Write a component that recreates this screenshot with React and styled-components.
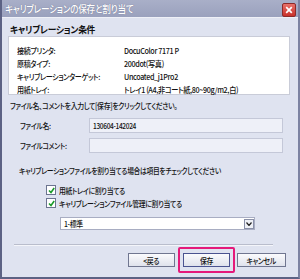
import React from 'react'
import styled, { createGlobalStyle } from 'styled-components'

const Global = createGlobalStyle`
  html, body {
    margin: 0;
    padding: 0;
    background: #dfe3f0;
  }
  body {
    font-family: "Noto Sans CJK JP", "Liberation Sans", sans-serif;
    font-size: 8px;
    font-weight: 500;
    font-feature-settings: "palt";
    letter-spacing: -0.4px;
    color: #111;
    white-space: nowrap;
  }
`

// the dialog's UI font is narrower than Noto, so squeeze text horizontally
const Narrow = styled.span`
  display: inline-block;
  transform: scaleX(${p => p.$sx || 0.86});
  transform-origin: ${p => p.$origin || 'left'} center;
`

const Win = styled.div`
  width: 300px;
  height: 279px;
  box-sizing: border-box;
  border-left: 2px solid #5c6284;
  border-right: 2px solid #7d83a2;
  border-bottom: 2px solid #5c6284;
  background: #dfe3f0;
  display: flex;
  flex-direction: column;
  overflow: hidden;
`

const TitleBar = styled.div`
  height: 17px;
  flex: none;
  display: flex;
  align-items: center;
  justify-content: space-between;
  padding: 0 2px 0 3px;
  background: linear-gradient(#a9afc8, #9aa1bd);
  border-bottom: 1px solid #eef0f7;
`

const Title = styled(Narrow)`
  color: #fff;
  font-size: 10px;
  letter-spacing: -0.3px;
  text-shadow: 0 0 1px #5d6282;
`

const CloseBtn = styled.div`
  width: 12px;
  height: 12px;
  margin-top: 3px;
  background: linear-gradient(#e8716a, #c8302a);
  border: 1px solid #8c2a2a;
  border-radius: 2px;
  display: flex;
  align-items: center;
  justify-content: center;
`

const Body = styled.div`
  flex: 1;
  display: flex;
  flex-direction: column;
  padding: 0 8px 0 6px;
`

const GroupHead = styled.div`
  font-weight: bold;
  font-size: 9.5px;
  padding: 5px 0 0 2px;
  height: 13px;
  line-height: 13px;
  letter-spacing: -0.3px;
`

const InfoBox = styled.div`
  background: #fff;
  border: 1px solid #c9ccd8;
  height: 59px;
  box-sizing: border-box;
  padding: 7px 0 0 8px;
  display: grid;
  grid-template-columns: 107px 1fr;
  grid-auto-rows: 13px;
  align-items: center;
`

const Hint = styled.div`
  margin-top: 4px;
  height: 13px;
  line-height: 13px;
  padding-left: 2px;
`

const FormRow = styled.div`
  display: flex;
  align-items: center;
  margin-top: ${p => p.$top}px;
  padding-left: 12px;
`

const FieldLabel = styled.span`
  width: 69px;
`

const Field = styled.div`
  width: 194px;
  height: 15px;
  box-sizing: border-box;
  border: 1px solid #c4c8d8;
  background: #eef0f8;
  display: flex;
  align-items: center;
  padding-left: 3px;
`

const AssignText = styled.div`
  margin-top: 12px;
  height: 12px;
  line-height: 12px;
  padding-left: 11px;
`

const CheckRow = styled.label`
  display: flex;
  align-items: center;
  gap: 3px;
  height: 12px;
  padding-left: 38px;
  margin-top: ${p => p.$top}px;
`

const Box = styled.span`
  width: 8px;
  height: 8px;
  flex: none;
  border: 1px solid #6c7490;
  background: #fff;
  display: flex;
  align-items: center;
  justify-content: center;
`

const Select = styled.div`
  margin: 8px 0 0 52px;
  width: 195px;
  height: 13px;
  box-sizing: border-box;
  border: 1px solid #a8adc2;
  background: #fff;
  display: flex;
  align-items: center;
  justify-content: space-between;
  padding-left: 3px;
`

const Arrow = styled.span`
  width: 10px;
  height: 10px;
  border: 1px solid #8a90a8;
  box-sizing: border-box;
  background: #eef0f6;
  display: flex;
  align-items: center;
  justify-content: center;
`

const Sep = styled.div`
  margin: 14px 17px 0 6px;
  height: 1px;
  background: #b9bdcc;
  border-bottom: 1px solid #f4f5fa;
`

const Buttons = styled.div`
  display: flex;
  justify-content: flex-end;
  align-items: center;
  padding-right: 4px;
  margin-top: 1px;
`

const Highlight = styled.div`
  border: 2px solid #e5197a;
  border-radius: 2px;
  padding: 4px 3px;
  margin: 0 2px 0 3px;
  display: flex;
`

const Btn = styled.div`
  width: ${p => p.$w}px;
  height: 14px;
  box-sizing: border-box;
  border: 1px solid ${p => (p.$primary ? '#4a5390' : '#707690')};
  background: linear-gradient(#fbfbfd, #dfe2ec);
  display: flex;
  align-items: center;
  justify-content: center;
`

const Check = () => (
  <svg width="7" height="7" viewBox="0 0 7 7">
    <path d="M1 3.5 L3 5.5 L6.2 1" stroke="#1a9a2a" strokeWidth="1.6" fill="none" />
  </svg>
)

const info = [
  ['接続プリンタ:', 'DocuColor 7171 P'],
  ['原稿タイプ:', '200dot(写真)'],
  ['キャリブレーションターゲット:', 'Uncoated_j1Pro2'],
  ['用紙トレイ:', 'トレイ1 (A4,非コート紙,80~90g/m2,白)'],
]

export default function App() {
  return (
    <>
      <Global />
      <Win>
        <TitleBar>
          <Title>キャリブレーションの保存と割り当て</Title>
          <CloseBtn>
            <svg width="8" height="8" viewBox="0 0 8 8">
              <path d="M1.2 1.2 L6.8 6.8 M6.8 1.2 L1.2 6.8" stroke="#fff" strokeWidth="1.7" />
            </svg>
          </CloseBtn>
        </TitleBar>
        <Body>
          <GroupHead><Narrow $sx={0.92}>キャリブレーション条件</Narrow></GroupHead>
          <InfoBox>
            {info.map(([k, v]) => (
              <React.Fragment key={k}>
                <span><Narrow $sx={0.88}>{k}</Narrow></span>
                <span><Narrow $sx={0.9}>{v}</Narrow></span>
              </React.Fragment>
            ))}
          </InfoBox>
          <Hint><Narrow>ファイル名、コメントを入力して[保存]をクリックしてください。</Narrow></Hint>
          <FormRow $top={6}>
            <FieldLabel><Narrow>ファイル名:</Narrow></FieldLabel>
            <Field><Narrow $sx={0.82}>130604-142024</Narrow></Field>
          </FormRow>
          <FormRow $top={5}>
            <FieldLabel><Narrow>ファイルコメント:</Narrow></FieldLabel>
            <Field />
          </FormRow>
          <AssignText><Narrow $sx={0.85}>キャリブレーションファイルを割り当てる場合は項目をチェックしてください</Narrow></AssignText>
          <CheckRow $top={7}>
            <Box><Check /></Box>
            <Narrow $sx={0.86}>用紙トレイに割り当てる</Narrow>
          </CheckRow>
          <CheckRow $top={1}>
            <Box><Check /></Box>
            <Narrow $sx={0.86}>キャリブレーションファイル管理に割り当てる</Narrow>
          </CheckRow>
          <Select>
            <Narrow>1-標準</Narrow>
            <Arrow>
              <svg width="6" height="4" viewBox="0 0 6 4">
                <path d="M0.5 0.5 L3 3.5 L5.5 0.5" stroke="#222" strokeWidth="1.2" fill="none" />
              </svg>
            </Arrow>
          </Select>
          <Sep />
          <Buttons>
            <Btn $w={47}><Narrow $origin="center">&lt;戻る</Narrow></Btn>
            <Highlight>
              <Btn $w={47} $primary><Narrow $origin="center">保存</Narrow></Btn>
            </Highlight>
            <Btn $w={49}><Narrow $origin="center">キャンセル</Narrow></Btn>
          </Buttons>
        </Body>
      </Win>
    </>
  )
}
